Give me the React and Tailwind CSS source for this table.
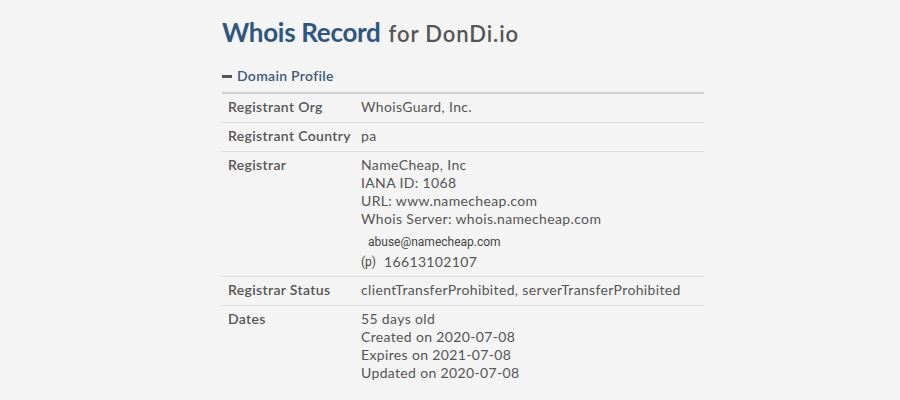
export default function App() {
  const lato = { fontFamily: "Lato, 'Open Sans', sans-serif" };
  return (
    <div className="w-[900px] h-[400px] bg-[#f4f4f4] overflow-hidden" style={lato}>
      <div className="ml-[222px] w-[482px] pt-[15px]">
        <h1 className="flex items-baseline gap-[8px] leading-[34px]">
          <span className="text-[26px] font-bold tracking-[-0.3px] text-[#2f5680]">Whois Record</span>
          <span className="text-[22px] font-semibold tracking-[0.9px] text-[#555]">for DonDi.io</span>
        </h1>
        <div className="mt-[16px] flex items-center gap-[5px] text-[14px] font-semibold tracking-[0.3px] text-[#3a5a80] leading-[18px]">
          <span className="inline-block w-[10px] h-[3px] bg-[#555]"></span>
          <span>Domain Profile</span>
        </div>
        <div className="mt-[7px] border-t-2 border-[#d0d0d0] text-[14px] tracking-[0.35px] leading-[18px] text-[#555]">
          <Row label="Registrant Org">WhoisGuard, Inc.</Row>
          <Row label="Registrant Country">pa</Row>
          <Row label="Registrar" tight>
            <div>NameCheap, Inc</div>
            <div>IANA ID: 1068</div>
            <div>URL: www.namecheap.com</div>
            <div>Whois Server: whois.namecheap.com</div>
            <div className="mt-[5px] pl-[7px] text-[12px] tracking-normal text-[#444]" style={{ fontFamily: "Roboto, Arial, sans-serif" }}>abuse@namecheap.com</div>
            <div className="mt-[2px] flex items-center">
              <span className="text-[12px] tracking-normal text-[#444] w-[23px]" style={{ fontFamily: "Roboto, Arial, sans-serif" }}>(p)</span>
              <span>16613102107</span>
            </div>
          </Row>
          <Row label="Registrar Status">clientTransferProhibited, serverTransferProhibited</Row>
          <Row label="Dates" last>
            <div>55 days old</div>
            <div>Created on 2020-07-08</div>
            <div>Expires on 2021-07-08</div>
            <div>Updated on 2020-07-08</div>
          </Row>
        </div>
      </div>
    </div>
  );
}

function Row({ label, children, last, tight }) {
  return (
    <div className={"flex pt-[4px] " + (tight ? "pb-[5px] " : "pb-[6px] ") + (last ? "" : "border-b border-[#dcdcdc]")}>
      <div className="w-[139px] pl-[6px] font-semibold text-[#555]">{label}</div>
      <div className="flex-1">{children}</div>
    </div>
  );
}
